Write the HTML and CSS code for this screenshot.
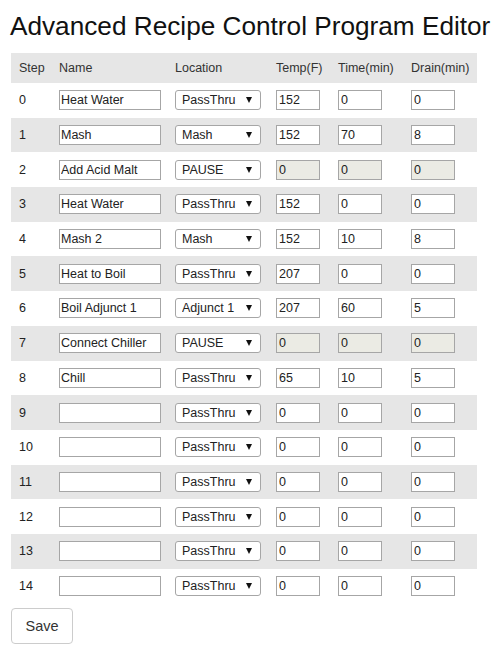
FILE: index.html
```html
<!DOCTYPE html>
<html>
<head>
<meta charset="utf-8">
<title>Advanced Recipe Control Program Editor</title>
<link rel="stylesheet" href="styles.css">
</head>
<body>
<div class="page">
  <h1 class="title">Advanced Recipe Control Program Editor</h1>
  <table class="steps">
    <colgroup>
      <col class="c-step"><col class="c-name"><col class="c-loc"><col class="c-temp"><col class="c-time"><col class="c-drain">
    </colgroup>
    <thead>
      <tr><th>Step</th><th>Name</th><th>Location</th><th>Temp(F)</th><th>Time(min)</th><th>Drain(min)</th></tr>
    </thead>
    <tbody>
      <tr><td>0</td><td><input class="in-name" value="Heat Water"></td><td><span class="sel"><select><option>PassThru</option></select></span></td><td><input class="in-num" value="152"></td><td><input class="in-num" value="0"></td><td><input class="in-num" value="0"></td></tr>
      <tr><td>1</td><td><input class="in-name" value="Mash"></td><td><span class="sel"><select><option>Mash</option></select></span></td><td><input class="in-num" value="152"></td><td><input class="in-num" value="70"></td><td><input class="in-num" value="8"></td></tr>
      <tr><td>2</td><td><input class="in-name" value="Add Acid Malt"></td><td><span class="sel"><select><option>PAUSE</option></select></span></td><td><input class="in-num" value="0" disabled></td><td><input class="in-num" value="0" disabled></td><td><input class="in-num" value="0" disabled></td></tr>
      <tr><td>3</td><td><input class="in-name" value="Heat Water"></td><td><span class="sel"><select><option>PassThru</option></select></span></td><td><input class="in-num" value="152"></td><td><input class="in-num" value="0"></td><td><input class="in-num" value="0"></td></tr>
      <tr><td>4</td><td><input class="in-name" value="Mash 2"></td><td><span class="sel"><select><option>Mash</option></select></span></td><td><input class="in-num" value="152"></td><td><input class="in-num" value="10"></td><td><input class="in-num" value="8"></td></tr>
      <tr><td>5</td><td><input class="in-name" value="Heat to Boil"></td><td><span class="sel"><select><option>PassThru</option></select></span></td><td><input class="in-num" value="207"></td><td><input class="in-num" value="0"></td><td><input class="in-num" value="0"></td></tr>
      <tr><td>6</td><td><input class="in-name" value="Boil Adjunct 1"></td><td><span class="sel"><select><option>Adjunct 1</option></select></span></td><td><input class="in-num" value="207"></td><td><input class="in-num" value="60"></td><td><input class="in-num" value="5"></td></tr>
      <tr><td>7</td><td><input class="in-name" value="Connect Chiller"></td><td><span class="sel"><select><option>PAUSE</option></select></span></td><td><input class="in-num" value="0" disabled></td><td><input class="in-num" value="0" disabled></td><td><input class="in-num" value="0" disabled></td></tr>
      <tr><td>8</td><td><input class="in-name" value="Chill"></td><td><span class="sel"><select><option>PassThru</option></select></span></td><td><input class="in-num" value="65"></td><td><input class="in-num" value="10"></td><td><input class="in-num" value="5"></td></tr>
      <tr><td>9</td><td><input class="in-name" value=""></td><td><span class="sel"><select><option>PassThru</option></select></span></td><td><input class="in-num" value="0"></td><td><input class="in-num" value="0"></td><td><input class="in-num" value="0"></td></tr>
      <tr><td>10</td><td><input class="in-name" value=""></td><td><span class="sel"><select><option>PassThru</option></select></span></td><td><input class="in-num" value="0"></td><td><input class="in-num" value="0"></td><td><input class="in-num" value="0"></td></tr>
      <tr><td>11</td><td><input class="in-name" value=""></td><td><span class="sel"><select><option>PassThru</option></select></span></td><td><input class="in-num" value="0"></td><td><input class="in-num" value="0"></td><td><input class="in-num" value="0"></td></tr>
      <tr><td>12</td><td><input class="in-name" value=""></td><td><span class="sel"><select><option>PassThru</option></select></span></td><td><input class="in-num" value="0"></td><td><input class="in-num" value="0"></td><td><input class="in-num" value="0"></td></tr>
      <tr><td>13</td><td><input class="in-name" value=""></td><td><span class="sel"><select><option>PassThru</option></select></span></td><td><input class="in-num" value="0"></td><td><input class="in-num" value="0"></td><td><input class="in-num" value="0"></td></tr>
      <tr><td>14</td><td><input class="in-name" value=""></td><td><span class="sel"><select><option>PassThru</option></select></span></td><td><input class="in-num" value="0"></td><td><input class="in-num" value="0"></td><td><input class="in-num" value="0"></td></tr>
    </tbody>
  </table>
  <button class="save" type="button">Save</button>
</div>
</body>
</html>
```

FILE: styles.css
```css
html, body {
  margin: 0;
  padding: 0;
  background: #ffffff;
}

.page {
  padding: 12px 11px 0 11px;
  font-family: "Liberation Sans", Arial, sans-serif;
  color: #222;
}

.title {
  margin: 0 0 13px -1px;
  font-size: 26.2px;
  line-height: 28px;
  font-weight: normal;
  color: #111;
  white-space: nowrap;
}

.steps {
  border-collapse: collapse;
  table-layout: fixed;
  width: 466px;
  font-size: 12.5px;
}

.c-step { width: 40px; }
.c-name { width: 116px; }
.c-loc { width: 101px; }
.c-temp { width: 62px; }
.c-time { width: 73px; }
.c-drain { width: 74px; }

.steps th {
  background: #e6e6e6;
  height: 30px;
  padding: 0 8px;
  text-align: left;
  font-weight: normal;
  color: #333;
  vertical-align: middle;
  white-space: nowrap;
}

.steps td {
  height: 34.7px;
  padding: 0 8px;
  vertical-align: middle;
  color: #222;
  white-space: nowrap;
}

.steps tbody tr:nth-child(even) td {
  background: #e6e6e6;
}

.steps input {
  box-sizing: border-box;
  height: 20px;
  margin: 0;
  border: 1px solid #a6a6a6;
  border-radius: 0;
  background: #ffffff;
  font-family: "Liberation Sans", Arial, sans-serif;
  font-size: 12.5px;
  color: #222;
  display: block;
  outline: none;
}

.in-name {
  width: 102px;
  padding: 0 1px;
}

.in-num {
  width: 44px;
  padding: 0 2px;
}

.steps input:disabled {
  background: #ebebe4;
  color: #222;
  -webkit-text-fill-color: #222;
  opacity: 1;
}

.sel {
  position: relative;
  display: block;
  width: 86px;
  height: 20px;
}

.sel select {
  appearance: none;
  -webkit-appearance: none;
  box-sizing: border-box;
  width: 86px;
  height: 20px;
  margin: 0;
  padding: 0 0 0 6px;
  border: 1px solid #a6a6a6;
  border-radius: 3px;
  background: #ffffff;
  font-family: "Liberation Sans", Arial, sans-serif;
  font-size: 12.5px;
  color: #222;
  display: block;
  outline: none;
}

.sel::after {
  content: "";
  position: absolute;
  right: 9px;
  top: 7px;
  width: 0;
  height: 0;
  border-left: 3.5px solid transparent;
  border-right: 3.5px solid transparent;
  border-top: 6px solid #111;
  pointer-events: none;
}

.save {
  box-sizing: border-box;
  display: block;
  margin-top: 5px;
  width: 62px;
  height: 36px;
  padding: 0;
  border: 1px solid #cccccc;
  border-radius: 4px;
  background: #ffffff;
  font-family: "Liberation Sans", Arial, sans-serif;
  font-size: 14.5px;
  color: #333;
}
```
